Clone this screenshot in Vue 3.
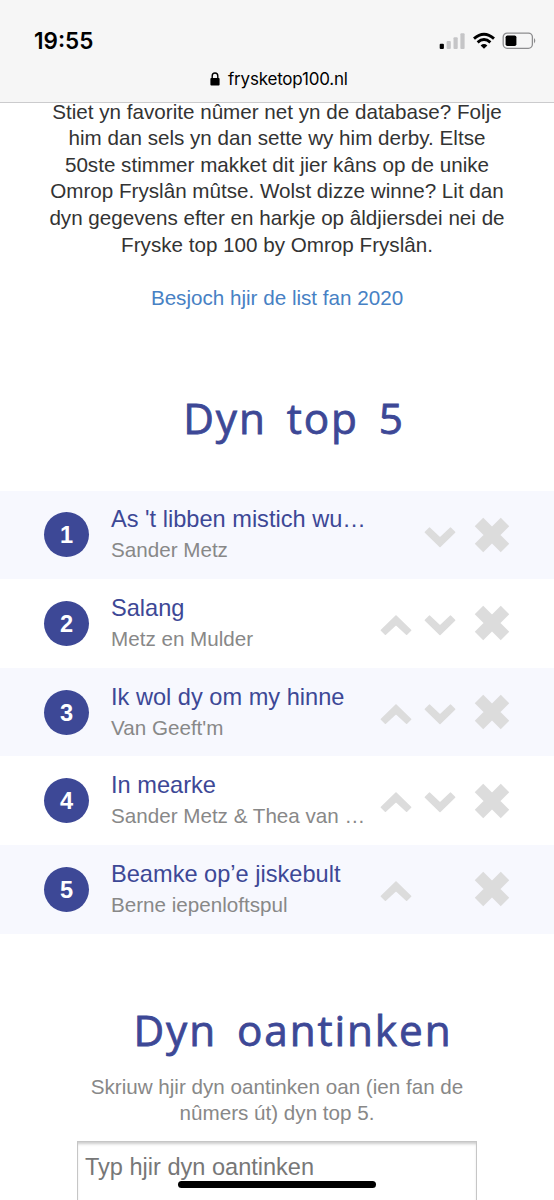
<script setup>
const songs = [
  { title: "As 't libben mistich wu…", artist: 'Sander Metz', up: false, down: true },
  { title: 'Salang', artist: 'Metz en Mulder', up: true, down: true },
  { title: 'Ik wol dy om my hinne', artist: "Van Geeft'm", up: true, down: true },
  { title: 'In mearke', artist: 'Sander Metz & Thea van …', up: true, down: true },
  { title: 'Beamke op’e jiskebult', artist: 'Berne iepenloftspul', up: true, down: false },
]
</script>

<template>
  <div class="screen">
    <header class="bar">
      <div class="status">
        <span class="time">19:55</span>
        <svg class="indicators" width="100" height="20" viewBox="0 0 100 20">
          <rect x="0.7" y="11.8" width="4.2" height="5.2" rx="1" fill="#000" />
          <rect x="7.6" y="9" width="4.2" height="8" rx="1" fill="#c5c5c7" />
          <rect x="14.5" y="5.2" width="4.2" height="11.8" rx="1" fill="#c5c5c7" />
          <rect x="21.4" y="1.2" width="4.2" height="15.8" rx="1" fill="#c5c5c7" />
          <g fill="none" stroke="#000" stroke-width="2.9">
            <path d="M35 6.6Q45 -2.2 55 6.6" />
            <path d="M38.6 10.4Q45 4.8 51.4 10.4" />
          </g>
          <path d="M41.6 13.4Q45 10.6 48.4 13.4L45 16.8Z" />
          <rect x="64.2" y="1.1" width="29.2" height="15.2" rx="4" fill="none" stroke="#8d8d8f" stroke-width="1.3" />
          <rect x="66.6" y="3.4" width="10.8" height="10.6" rx="1.8" />
          <path d="M95 6Q97.6 8.7 95 11.4Z" fill="#8d8d8f" />
        </svg>
      </div>
      <div class="address">
        <svg width="10" height="14" viewBox="0 0 10 14">
          <path d="M2.2 7V3.9a2.8 2.9 0 0 1 5.6 0V7" fill="none" stroke="#000" stroke-width="1.4" />
          <rect x="0.4" y="6" width="9.2" height="7.6" rx="1" />
        </svg>
        <span>frysketop100.nl</span>
      </div>
    </header>

    <main>
      <p class="intro">
        Stiet yn favorite nûmer net yn de database? Folje<br />
        him dan sels yn dan sette wy him derby. Eltse<br />
        50ste stimmer makket dit jier kâns op de unike<br />
        Omrop Fryslân mûtse. Wolst dizze winne? Lit dan<br />
        dyn gegevens efter en harkje op âldjiersdei nei de<br />
        Fryske top 100 by Omrop Fryslân.
      </p>
      <a class="link">Besjoch hjir de list fan 2020</a>

      <h2 class="top">Dyn top 5</h2>
      <ol class="songs">
        <li v-for="(song, i) in songs" :key="i" class="song">
          <span class="rank">{{ i + 1 }}</span>
          <div class="info">
            <div class="title">{{ song.title }}</div>
            <div class="artist">{{ song.artist }}</div>
          </div>
          <svg class="arrow up" viewBox="0 0 32 22">
            <path v-if="song.up" d="M16 2L30.6 16.2L26.6 20.2L16 10.4L5.4 20.2L1.4 16.2Z" />
          </svg>
          <svg class="arrow down" viewBox="0 0 32 22">
            <path v-if="song.down" d="M16 20.4L30.6 6.2L26.6 2.2L16 12L5.4 2.2L1.4 6.2Z" />
          </svg>
          <svg class="remove" viewBox="0 0 36 36">
            <path d="M5 5L31 31M31 5L5 31" />
          </svg>
        </li>
      </ol>

      <h2 class="memory">Dyn oantinken</h2>
      <p class="hint">Skriuw hjir dyn oantinken oan (ien fan de<br />nûmers út) dyn top 5.</p>
      <div class="field">Typ hjir dyn oantinken</div>
    </main>
    <div class="home"></div>
  </div>
</template>

<style>
body { margin: 0; background: #fff; }
</style>

<style scoped>
.screen {
  position: relative;
  width: 554px;
  height: 1200px;
  overflow: hidden;
  background: #fff;
  font-family: "Liberation Sans", Arial, sans-serif;
}
.bar {
  box-sizing: border-box;
  height: 103px;
  padding-top: 29px;
  background: #f6f6f6;
  border-bottom: 1px solid #cbcbcd;
  font-family: Inter, sans-serif;
  color: #000;
}
.status {
  display: flex;
  justify-content: space-between;
  height: 24px;
  padding: 0 15px 0 34px;
}
.time { font-size: 22.5px; font-weight: 600; line-height: 24px; }
.indicators { margin-top: 3px; }
.address {
  display: flex;
  align-items: center;
  gap: 8px;
  height: 24px;
  margin: 14px 0 0 210px;
  font-size: 17px;
  letter-spacing: -0.2px;
}
main { display: flow-root; }
.intro {
  margin: -4.4px 0 0;
  text-align: center;
  font-size: 20.64px;
  line-height: 26.6px;
  color: #333;
  white-space: nowrap;
}
.link {
  display: block;
  margin-top: 26.4px;
  text-align: center;
  font-size: 20.64px;
  line-height: 26.6px;
  color: #4781c4;
}
h2 {
  margin: 0;
  font-family: "Open Sans", sans-serif;
  font-size: 42.3px;
  font-weight: 400;
  line-height: 60px;
  letter-spacing: 1.9px;
  word-spacing: 7px;
  color: #3d4896;
  -webkit-text-stroke: 0.8px #3d4896;
  text-align: center;
  white-space: nowrap;
}
.top { margin-top: 76.4px; padding-left: 34px; }
.songs { margin: 43px 0 0; padding: 0; list-style: none; }
.song {
  display: flex;
  align-items: center;
  box-sizing: border-box;
  height: 88.62px;
  padding-left: 44px;
}
.song:nth-child(odd) { background: #f7f8fe; }
.rank {
  flex: none;
  width: 45px;
  height: 45px;
  border-radius: 50%;
  background: #3d4896;
  color: #fff;
  font-size: 23.6px;
  font-weight: bold;
  line-height: 46px;
  text-align: center;
}
.info { flex: none; width: 260px; margin-left: 22px; }
.title, .artist { white-space: nowrap; }
.title { font-size: 23.6px; line-height: 30px; color: #3d4896; }
.artist { font-size: 20.64px; line-height: 31px; color: #888; }
.arrow {
  flex: none;
  width: 32px;
  height: 22px;
  margin-top: 3.5px;
  fill: #dcdcdc;
  stroke: #dcdcdc;
  stroke-width: 1.6;
  stroke-linejoin: round;
}
.up { margin-left: 9px; }
.down { margin-left: 12px; }
.remove { flex: none; width: 36px; height: 36px; margin-left: 18px; fill: none; stroke: #dcdcdc; stroke-width: 12; }
.memory { margin-top: 66px; padding-left: 32px; }
.hint {
  margin: 14px 0 0;
  text-align: center;
  font-size: 20.64px;
  line-height: 26.6px;
  color: #888;
}
.field {
  box-sizing: border-box;
  width: 400px;
  height: 90px;
  margin: 14.4px 0 0 77px;
  padding: 10px 7px;
  border: 1.5px solid #c6c6c6;
  box-shadow: inset 0 3px 3px -1px #ccc;
  font-size: 23.55px;
  line-height: 30px;
  color: #777;
}
.home {
  position: absolute;
  left: 178px;
  bottom: 12px;
  width: 198px;
  height: 7px;
  border-radius: 4px;
  background: #000;
}
</style>
